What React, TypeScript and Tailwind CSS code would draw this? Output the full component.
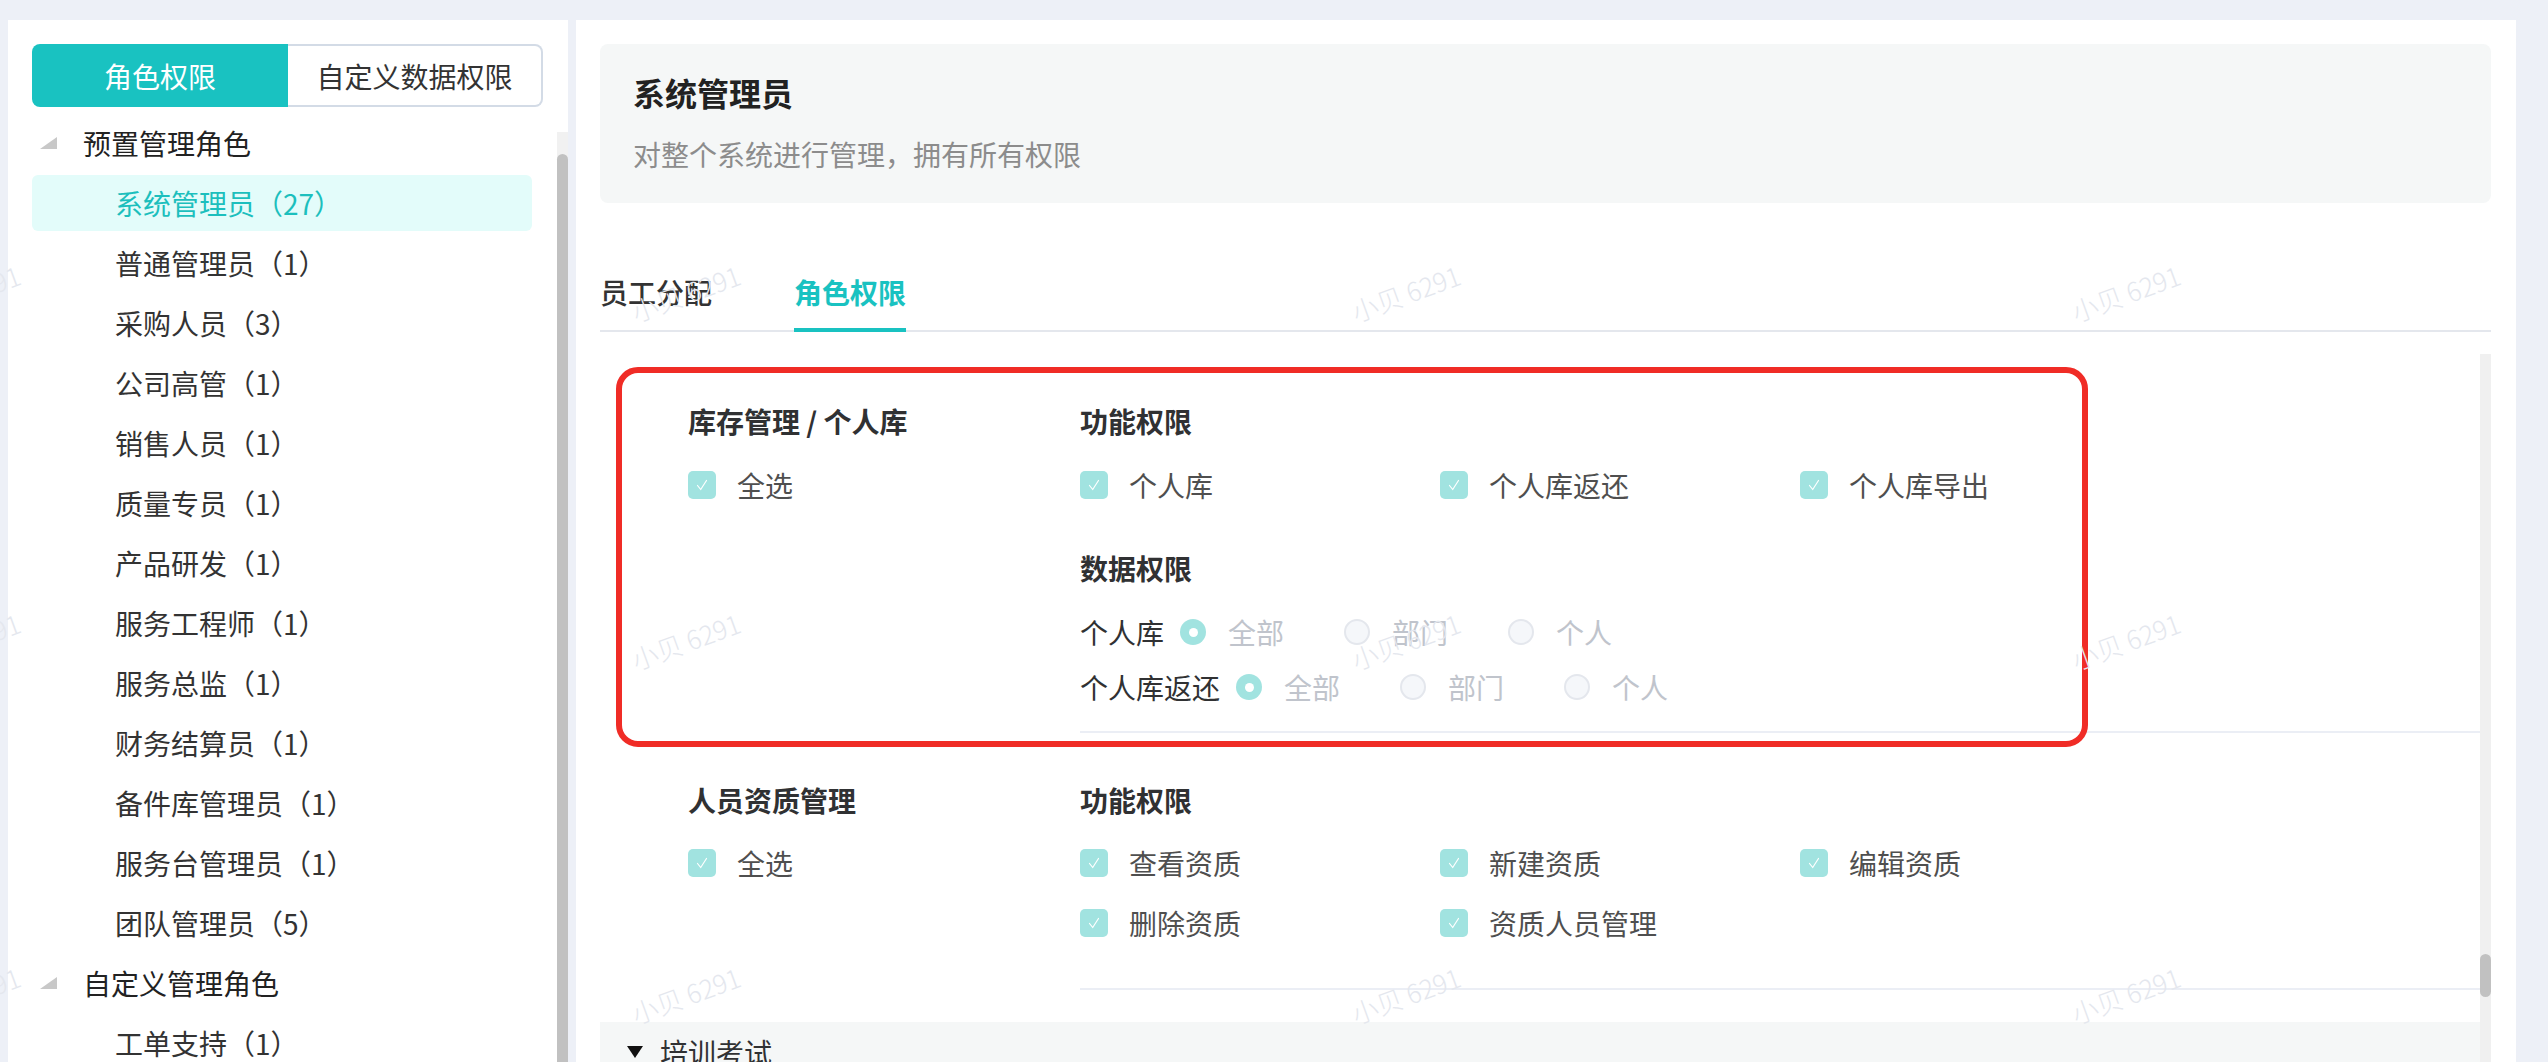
const roles: [string, boolean][] = [
  ["系统管理员（27）", true],
  ["普通管理员（1）", false],
  ["采购人员（3）", false],
  ["公司高管（1）", false],
  ["销售人员（1）", false],
  ["质量专员（1）", false],
  ["产品研发（1）", false],
  ["服务工程师（1）", false],
  ["服务总监（1）", false],
  ["财务结算员（1）", false],
  ["备件库管理员（1）", false],
  ["服务台管理员（1）", false],
  ["团队管理员（5）", false],
];

const marks = [-91, 629, 1349, 2069].flatMap((x) => [273, 621, 975].map((y) => [x, y]));

function TreeHead({ label }: { label: string }) {
  return (
    <div className="flex h-[60px] items-center">
      <svg width="17" height="12" viewBox="0 0 17 12" className="ml-[8px]">
        <path d="M17 0V12H0Z" fill="#c8c8c8" />
      </svg>
      <span className="ml-[26px] text-[28px] leading-[40px] text-[#222]">{label}</span>
    </div>
  );
}

function Check() {
  return (
    <span className="flex h-[28px] w-[28px] shrink-0 items-center justify-center rounded-[5px] bg-[#a1e3e0]">
      <svg width="20" height="20" viewBox="0 0 20 20" fill="none">
        <path d="M5.5 10.5l3.2 4L14.5 5.5" stroke="#fff" strokeWidth="1.2" strokeLinecap="round" strokeLinejoin="round" />
      </svg>
    </span>
  );
}

function CheckItem({ label }: { label: string }) {
  return (
    <div className="flex h-[40px] items-center gap-[21px]">
      <Check />
      <span className="text-[28px] leading-[40px] text-[#4f4f4f]">{label}</span>
    </div>
  );
}

function Radio({ label, on }: { label: string; on?: boolean }) {
  return (
    <span className="mr-[60px] flex items-center">
      {on ? (
        <span className="flex h-[26px] w-[26px] items-center justify-center rounded-full bg-[#a1e3e0]">
          <span className="h-[9px] w-[9px] rounded-full bg-white" />
        </span>
      ) : (
        <span className="h-[26px] w-[26px] rounded-full border-2 border-[#e4e7ed] bg-[#f5f7fa]" />
      )}
      <span className="ml-[22px] text-[28px] leading-[40px] text-[#c0c4cc]">{label}</span>
    </span>
  );
}

function RadioRow({ label }: { label: string }) {
  return (
    <div className="flex h-[40px] items-center">
      <span className="mr-[16px] text-[28px] leading-[40px] text-[#303133]">{label}</span>
      <Radio label="全部" on />
      <Radio label="部门" />
      <Radio label="个人" />
    </div>
  );
}

export default function App() {
  return (
    <div className="relative flex h-[1062px] w-[2548px] gap-[8px] overflow-hidden bg-[#edf0f7] pl-[8px] pr-[32px] pt-[20px] font-['PingFang_SC','Noto_Sans_CJK_SC',sans-serif]">
      {/* left: role tree */}
      <aside className="flex w-[560px] shrink-0 flex-col bg-white pl-[24px] pt-[24px]">
        <div className="flex h-[63px] w-[511px] text-[28px]">
          <div className="flex w-[256px] items-center justify-center rounded-l-[8px] bg-[#19c2c1] text-white">角色权限</div>
          <div className="flex flex-1 items-center justify-center rounded-r-[8px] border-2 border-l-0 border-[#d3dbe6] text-[#333]">
            自定义数据权限
          </div>
        </div>
        <div className="mt-[6px] flex min-h-0 flex-1">
          <div className="w-[500px]">
            <TreeHead label="预置管理角色" />
            {roles.map(([name, active]) => (
              <div key={name} className="h-[60px] py-[2px]">
                <div
                  className={
                    active
                      ? "flex h-[56px] items-center rounded-[6px] bg-[#e3fcfa] pl-[83px] text-[28px] text-[#1cbfbd]"
                      : "flex h-[56px] items-center pl-[83px] text-[28px] text-[#333]"
                  }
                >
                  {name}
                </div>
              </div>
            ))}
            <TreeHead label="自定义管理角色" />
            <div className="flex h-[60px] items-center pl-[83px] text-[28px] text-[#333]">工单支持（1）</div>
          </div>
          <div className="flex-1" />
          <div className="flex w-[11px] flex-col pt-[19px]">
            <div className="flex flex-1 flex-col bg-[#f1f1f1] pt-[22px]">
              <div className="flex-1 rounded-t-full bg-[#c1c1c1]" />
            </div>
          </div>
        </div>
      </aside>

      {/* right: role detail */}
      <main className="flex flex-1 flex-col bg-white pl-[24px] pr-[25px] pt-[24px]">
        <div className="h-[159px] rounded-[8px] bg-[#f5f7f7] pl-[33px] pt-[28px]">
          <h1 className="text-[32px] font-bold leading-[40px] text-[#222]">系统管理员</h1>
          <p className="mt-[22px] text-[28px] leading-[40px] text-[#8c8c8c]">对整个系统进行管理，拥有所有权限</p>
        </div>

        <div className="mt-[69px] flex gap-[82px] border-b-2 border-[#e4e7ed]">
          <span className="-mb-[2px] border-b-4 border-transparent pb-[16px] text-[28px] font-medium leading-[40px] text-[#333]">员工分配</span>
          <span className="-mb-[2px] border-b-4 border-[#19c2c1] pb-[16px] text-[28px] font-bold leading-[40px] text-[#19c2c1]">角色权限</span>
        </div>

        <div className="mt-[22px] flex min-h-0 flex-1">
          <div className="flex-1">
            <section className="flex pt-[47px]">
              <div className="w-[480px] shrink-0 pl-[88px]">
                <h3 className="text-[28px] font-bold leading-[40px] text-[#303133]">库存管理 / 个人库</h3>
                <div className="mt-[24px]">
                  <CheckItem label="全选" />
                </div>
              </div>
              <div className="flex-1 border-b-2 border-[#ebeef5] pb-[24px]">
                <h3 className="text-[28px] font-bold leading-[40px] text-[#303133]">功能权限</h3>
                <div className="mt-[24px] grid grid-cols-[360px_360px_360px] gap-y-[20px]">
                  <CheckItem label="个人库" />
                  <CheckItem label="个人库返还" />
                  <CheckItem label="个人库导出" />
                </div>
                <h3 className="mt-[43px] text-[28px] font-bold leading-[40px] text-[#303133]">数据权限</h3>
                <div className="mt-[24px] flex flex-col gap-[15px]">
                  <RadioRow label="个人库" />
                  <RadioRow label="个人库返还" />
                </div>
              </div>
            </section>

            <section className="flex pt-[47px]">
              <div className="w-[480px] shrink-0 pl-[88px]">
                <h3 className="text-[28px] font-bold leading-[40px] text-[#303133]">人员资质管理</h3>
                <div className="mt-[23px]">
                  <CheckItem label="全选" />
                </div>
              </div>
              <div className="flex-1 border-b-2 border-[#ebeef5] pb-[45px]">
                <h3 className="text-[28px] font-bold leading-[40px] text-[#303133]">功能权限</h3>
                <div className="mt-[23px] grid grid-cols-[360px_360px_360px] gap-y-[20px]">
                  <CheckItem label="查看资质" />
                  <CheckItem label="新建资质" />
                  <CheckItem label="编辑资质" />
                  <CheckItem label="删除资质" />
                  <CheckItem label="资质人员管理" />
                </div>
              </div>
            </section>

            <div className="mt-[32px] flex h-[80px] items-start bg-[#f5f7f7] pl-[27px] pt-[10px]">
              <div className="flex h-[40px] items-center">
                <svg width="16" height="12" viewBox="0 0 16 12">
                  <path d="M0 0H16L8 12Z" fill="#111" />
                </svg>
                <span className="ml-[17px] text-[28px] leading-[40px] text-[#303133]">培训考试</span>
              </div>
            </div>
          </div>
          <div className="w-[11px] bg-[#f0f0f0] pt-[600px]">
            <div className="h-[43px] rounded-full bg-[#c1c1c1]" />
          </div>
        </div>
      </main>

      {/* annotation frame */}
      <div className="pointer-events-none absolute left-[616px] top-[367px] h-[380px] w-[1472px] rounded-[22px] border-[6px] border-[#f02c26]" />

      {/* watermark */}
      {marks.map(([x, y]) => (
        <span
          key={`${x}-${y}`}
          className="pointer-events-none absolute -rotate-[20deg] whitespace-nowrap text-[26px] font-light text-[#e4e7ee]"
          style={{ left: x, top: y }}
        >
          小贝 6291
        </span>
      ))}
    </div>
  );
}
